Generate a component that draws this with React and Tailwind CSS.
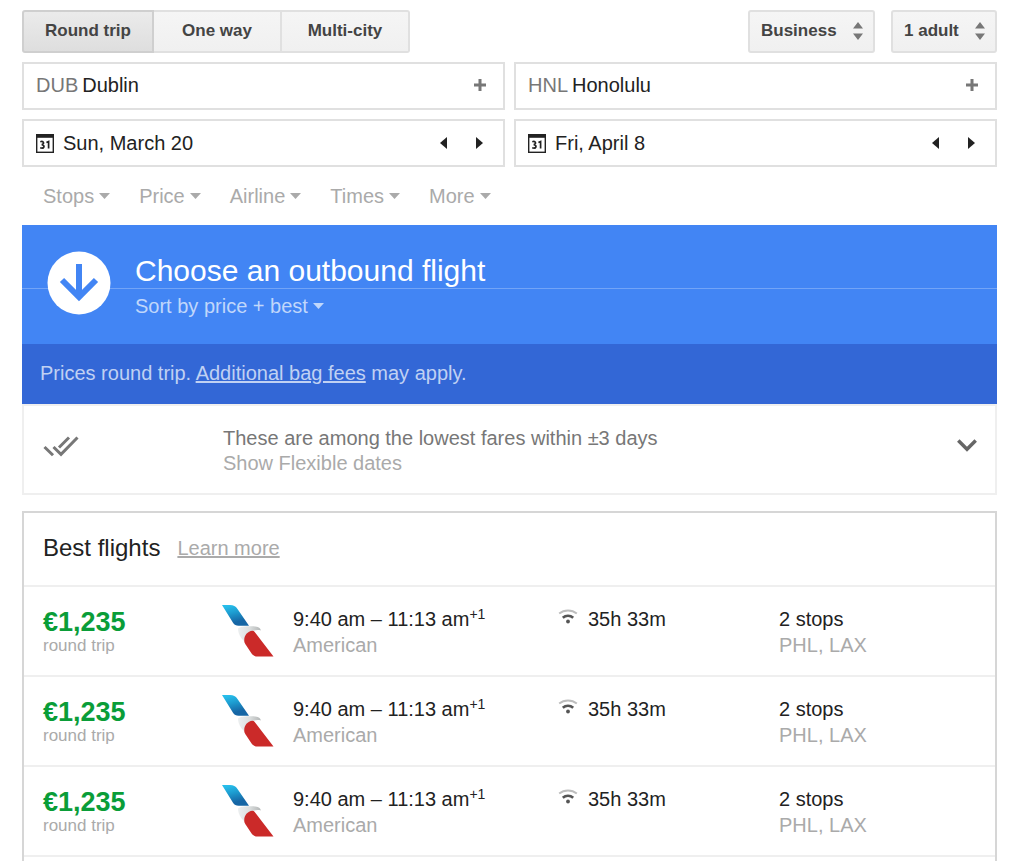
import { useState } from 'react';

const tripTypes = ['Round trip', 'One way', 'Multi-city'];
const filters = ['Stops', 'Price', 'Airline', 'Times', 'More'];

const flights = [
    { id: 1, price: '€1,235', times: '9:40 am – 11:13 am', airline: 'American', duration: '35h 33m', stops: '2 stops', via: 'PHL, LAX' },
    { id: 2, price: '€1,235', times: '9:40 am – 11:13 am', airline: 'American', duration: '35h 33m', stops: '2 stops', via: 'PHL, LAX' },
    { id: 3, price: '€1,235', times: '9:40 am – 11:13 am', airline: 'American', duration: '35h 33m', stops: '2 stops', via: 'PHL, LAX' },
];

function Caret() {
    return (
        <svg width="11" height="6" viewBox="0 0 11 6" fill="currentColor" aria-hidden="true">
            <path d="M0 0h11L5.5 6z" />
        </svg>
    );
}

function CalendarIcon() {
    return (
        <svg width="18" height="19" viewBox="0 0 18 19" fill="none" className="shrink-0 text-[#222]" aria-hidden="true">
            <rect x="0.7" y="0.7" width="16.6" height="17.6" stroke="currentColor" strokeWidth="1.4" />
            <path d="M0 0h18v3.8H0z" fill="currentColor" />
            <path d="M4.300 7.700c3.400-1.200 4.500 2.300 1.400 2.900 3.700.4 2.700 4.600-1.500 3.200M10.400 8.600l2.200-1v7" stroke="currentColor" strokeWidth="1.700" />
        </svg>
    );
}

function AirlineLogo({ id }) {
    return (
        <svg width="52" height="52" viewBox="0 0 52 52" className="block" role="img" aria-label="American">
            <defs>
                <linearGradient id={`tail-${id}`} x1="0" y1="0" x2="0.3" y2="1">
                    <stop offset="0.1" stopColor="#27bdea" />
                    <stop offset="0.45" stopColor="#1d9cd0" />
                    <stop offset="0.9" stopColor="#1666a5" />
                </linearGradient>
                <linearGradient id={`beak-${id}`} x1="0" y1="0" x2="1" y2="0">
                    <stop offset="0" stopColor="#eceff0" />
                    <stop offset="0.5" stopColor="#dcdfdf" />
                    <stop offset="1" stopColor="#b3b6b6" />
                </linearGradient>
            </defs>
            <path d="M0 0h8c3.500 0 5.500 1 7.500 4L27 20.700H16.500c-2.500 0-4-.8-5.500-3z" fill={`url(#tail-${id})`} />
            <path d="M16 23.500c2-1.500 5-2.300 9-2.300h4.500c5 0 9 1.300 9.300 4.300-3-.8-5-.2-8 .3-5 .5-8 4-8.300 10.700-4-3.500-6.500-8.500-6.500-13z" fill={`url(#beak-${id})`} />
            <path d="M22.300 36.500c-.6-5.500 2.700-10.200 8.200-10.700.9 0 1.600.4 2.200 1.200L51.500 51.500H36c-3 0-5-1-6.600-3.200l-5.300-8c-1-1.500-1.600-2.500-1.800-3.800z" fill="#cb2a29" />
        </svg>
    );
}

function WifiIcon() {
    return (
        <svg width="20" height="16" viewBox="0 0 20 16" fill="none" role="img" aria-label="Wi-Fi">
            <path d="M1.200 4.600c5-4.200 12.600-4.200 17.600 0" stroke="#bdbdbd" strokeWidth="2" />
            <path d="M4.800 8.700c3-2.600 7.400-2.600 10.400 0" stroke="#555" strokeWidth="2.600" />
            <circle cx="10" cy="12.500" r="1.900" fill="#555" />
        </svg>
    );
}

function SelectBox({ label, options, className }) {
    return (
        <div className="relative">
            <select
                aria-label={label}
                className={`h-[43px] appearance-none rounded-[3px] border-2 border-[#e0e0e0] bg-linear-to-b from-[#f5f5f5] to-[#f0f0f0] pb-0.5 pl-[11px] text-[17px] font-bold text-[#444] ${className}`}
            >
                {options.map((option) => (
                    <option key={option}>{option}</option>
                ))}
            </select>
            <svg width="10" height="18" viewBox="0 0 10 18" fill="#777" className="pointer-events-none absolute right-3 top-3" aria-hidden="true">
                <path d="M0 6.500L5 0l5 6.500zM0 11.500h10L5 18z" />
            </svg>
        </div>
    );
}

function PlaceField({ id, label, code, city }) {
    return (
        <div className="flex h-12 items-center border-2 border-[#e0e0e0] pb-0.5 pl-3 pr-[17px] text-[20px]">
            <label htmlFor={id} className="text-[#777]" aria-label={label}>{code}</label>
            <input id={id} type="text" defaultValue={city} className="ml-1 min-w-0 flex-1 text-[#222] outline-none" />
            <button type="button" aria-label="Add airport" className="text-[#777]">
                <svg width="12" height="12" viewBox="0 0 12 12" fill="currentColor">
                    <path d="M4.500 0h3v4.500H12v3H7.500V12h-3V7.500H0v-3h4.500z" />
                </svg>
            </button>
        </div>
    );
}

function DateField({ id, label, date }) {
    return (
        <div className="flex h-12 items-center border-2 border-[#e0e0e0] pl-3 pr-5 text-[20px] text-[#222]">
            <label htmlFor={id} aria-label={label}><CalendarIcon /></label>
            <input id={id} type="text" defaultValue={date} className="ml-[9px] min-w-0 flex-1 outline-none" />
            <div className="flex gap-[29px]">
                <button type="button" aria-label="Previous day">
                    <svg width="7" height="12" viewBox="0 0 7 12" fill="currentColor"><path d="M7 0v12L0 6z" /></svg>
                </button>
                <button type="button" aria-label="Next day">
                    <svg width="7" height="12" viewBox="0 0 7 12" fill="currentColor"><path d="M0 0v12l7-6z" /></svg>
                </button>
            </div>
        </div>
    );
}

function FlightRow({ flight }) {
    return (
        <tr className="h-[90px] border-t-2 border-[#efefef] align-top">
            <td className="pl-[19px] pt-[19px]">
                <div className="text-[27px] font-bold leading-8 text-[#0a9d38]">{flight.price}</div>
                <div className="text-[17px] leading-4 text-[#aaa]">round trip</div>
            </td>
            <td className="pt-[18px]"><AirlineLogo id={flight.id} /></td>
            <td className="pt-[19px]">
                <div className="leading-[26px]">
                    {flight.times}
                    <sup className="text-[14px] leading-none">+1</sup>
                </div>
                <div className="leading-[26px] text-[#aaa]">{flight.airline}</div>
            </td>
            <td className="pt-[19px]">
                <div className="flex gap-[10px] leading-[26px]">
                    <span className="pt-[3px]"><WifiIcon /></span>
                    {flight.duration}
                </div>
            </td>
            <td className="pt-[19px]">
                <div className="leading-[26px]">{flight.stops}</div>
                <div className="leading-[26px] text-[#aaa]">{flight.via}</div>
            </td>
        </tr>
    );
}

export default function App() {
    const [trip, setTrip] = useState('Round trip');

    return (
        <main className="bg-white pl-[22px] pr-6 pt-[10px] font-['Liberation_Sans',Arial,sans-serif] text-[20px] text-[#222]">
            {/* Trip type, cabin and passengers */}
            <div className="flex items-center justify-between">
                <div className="flex h-[43px] text-[17px] font-bold text-[#444]">
                    {tripTypes.map((type) => (
                        <button
                            key={type}
                            type="button"
                            aria-pressed={trip === type}
                            onClick={() => setTrip(type)}
                            className={`w-32 border-y-2 border-r-2 pb-0.5 first:w-[132px] first:rounded-l-[3px] first:border-l-2 last:rounded-r-[3px] ${
                                trip === type
                                    ? 'border-[#cfcfcf] bg-linear-to-b from-[#ebebeb] to-[#dedede]'
                                    : 'border-[#e0e0e0] bg-linear-to-b from-[#f5f5f5] to-[#f0f0f0]'
                            }`}
                        >
                            {type}
                        </button>
                    ))}
                </div>
                <div className="flex gap-4">
                    <SelectBox label="Cabin class" options={['Business', 'Economy', 'First']} className="w-[127px]" />
                    <SelectBox label="Passengers" options={['1 adult', '2 adults']} className="w-[106px]" />
                </div>
            </div>

            <div className="mt-[9px] grid grid-cols-2 gap-[9px]">
                <PlaceField id="from" label="From" code="DUB" city="Dublin" />
                <PlaceField id="to" label="To" code="HNL" city="Honolulu" />
                <DateField id="depart" label="Departure date" date="Sun, March 20" />
                <DateField id="return" label="Return date" date="Fri, April 8" />
            </div>

            {/* Filters */}
            <div className="flex h-[58px] items-center gap-[29px] pl-[21px] text-[#aaa]">
                {filters.map((filter) => (
                    <button key={filter} type="button" className="flex items-center gap-[5px]">
                        {filter}
                        <Caret />
                    </button>
                ))}
            </div>

            <section>
                <div className="relative flex h-[119px] bg-[#4285f4] pl-[25px] pt-[26px]">
                    <div className="absolute inset-x-0 top-[63px] h-px bg-[#72a4f7]" />
                    <svg width="64" height="64" viewBox="0 0 64 64" className="relative shrink-0" aria-hidden="true">
                        <circle cx="32" cy="32" r="31.500" fill="#fff" />
                        <path d="M32 13v33M15 29l17 17 17-17" fill="none" stroke="#4285f4" strokeWidth="6" />
                    </svg>
                    <div className="relative ml-6">
                        <h1 className="text-[30px] leading-10 text-white">Choose an outbound flight</h1>
                        <button type="button" className="flex items-center gap-[5px] leading-[30px] text-[#c0d7fb]">
                            Sort by price + best
                            <Caret />
                        </button>
                    </div>
                </div>
                <p className="flex h-[60px] items-center bg-[#3367d6] pb-0.5 pl-[18px] text-[#c0d1f3]">
                    <span>
                        Prices round trip. <a href="#bag-fees" className="underline">Additional bag fees</a> may apply.
                    </span>
                </p>
                <div className="flex h-[91px] items-center border-2 border-[#efefef] pb-2 pl-[19px] pr-[18px]">
                    <svg width="36" height="22" viewBox="0 0 36 22" fill="none" stroke="#777" strokeWidth="3" className="shrink-0" aria-hidden="true">
                        <path d="M1.500 12l8.500 8.300M10.500 12l7.500 7.300L34.500 2.500M16 12.500l10-10" />
                    </svg>
                    <div className="ml-36 flex-1 pt-[10px] leading-[25px]">
                        <p className="text-[#777]">These are among the lowest fares within ±3 days</p>
                        <a href="#flexible-dates" className="text-[#aaa]">Show Flexible dates</a>
                    </div>
                    <button type="button" aria-label="Expand">
                        <svg width="20" height="13" viewBox="0 0 20 13" fill="none" stroke="#666" strokeWidth="3.500">
                            <path d="M1.300 1.500l8.700 8.700 8.700-8.700" />
                        </svg>
                    </button>
                </div>
            </section>

            {/* Results */}
            <section className="mt-4 border-2 border-b-0 border-[#d6d6d6] pb-1">
                <div className="flex h-[72px] items-center gap-[17px] pb-0.5 pl-[19px]">
                    <h2 className="text-[24px]">Best flights</h2>
                    <a href="#learn-more" className="text-[#aaa] underline">Learn more</a>
                </div>
                <table className="w-full table-fixed border-collapse border-b-2 border-[#efefef]">
                    <colgroup>
                        <col className="w-[198px]" />
                        <col className="w-[71px]" />
                        <col className="w-[265px]" />
                        <col className="w-[221px]" />
                        <col />
                    </colgroup>
                    <tbody>
                        {flights.map((flight) => (
                            <FlightRow key={flight.id} flight={flight} />
                        ))}
                    </tbody>
                </table>
            </section>
        </main>
    );
}
